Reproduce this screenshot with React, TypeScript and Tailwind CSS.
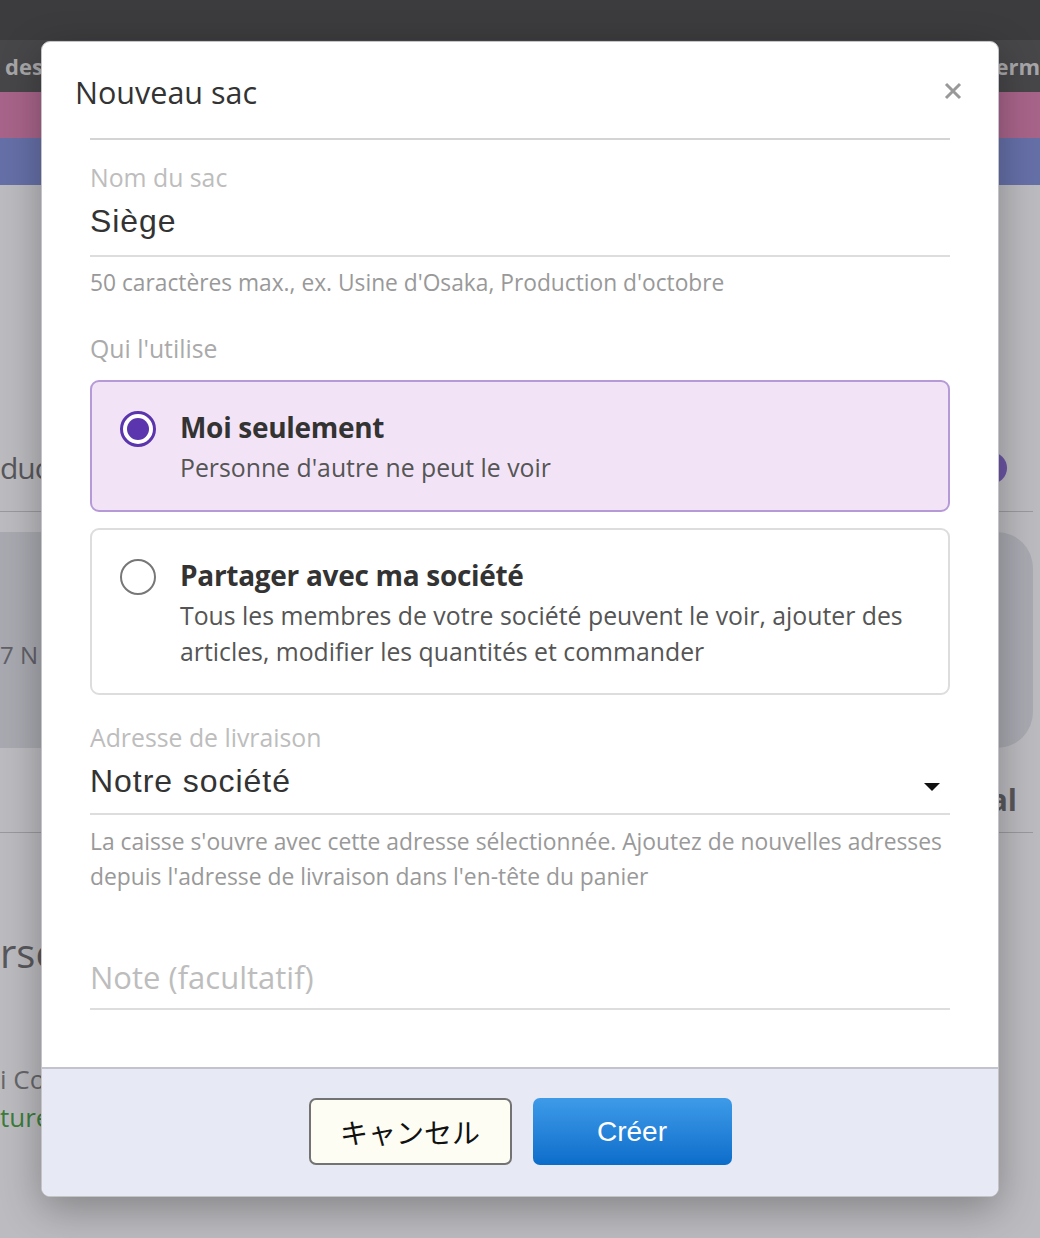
import React from 'react';

const sans = { fontFamily: '"Open Sans", "Noto Sans", sans-serif' };

function Radio({ checked }: { checked: boolean }) {
  if (checked) {
    return (
      <span className="mt-[3px] flex h-[36px] w-[36px] shrink-0 items-center justify-center rounded-full border-[3px] border-[#5b35ae] bg-white">
        <span className="h-[22px] w-[22px] rounded-full bg-[#5b35ae]" />
      </span>
    );
  }
  return <span className="mt-[3px] h-[36px] w-[36px] shrink-0 rounded-full border-2 border-[#777777] bg-white" />;
}

function Option({
  checked,
  title,
  desc,
}: {
  checked: boolean;
  title: string;
  desc: React.ReactNode;
}) {
  return (
    <div
      className={
        checked
          ? 'flex gap-[24px] rounded-[9px] border-2 border-[#b69ad8] bg-[#f2e4f6] pb-[25px] pl-[28px] pr-[20px] pt-[26px]'
          : 'flex gap-[24px] rounded-[9px] border-2 border-[#dddddd] bg-white pb-[24px] pl-[28px] pr-[20px] pt-[26px]'
      }
    >
      <Radio checked={checked} />
      <div>
        <div className="text-[28px] font-bold leading-[38px] tracking-[-0.3px] text-[#333333]">{title}</div>
        <div className="mt-[3px] text-[24.8px] leading-[36px] text-[#555555]">{desc}</div>
      </div>
    </div>
  );
}

export default function App() {
  return (
    <div className="relative h-[1238px] w-[1040px] overflow-hidden bg-[#bcbcc0]" style={sans}>
      {/* page behind the dialog */}
      <div className="h-[40px] bg-[#3c3b3d]" />
      <div className="flex h-[52px] items-center justify-between bg-[#474648] pl-[5px] text-[22px] font-bold text-[#a7a7aa]">
        <span>des</span>
        <span>erm</span>
      </div>
      <div className="h-[46px] bg-[#a8648a]" />
      <div className="h-[47px] bg-[#6670a8]" />
      <div className="pr-[7px]">
        <div className="mt-[255px] flex h-[72px] items-center justify-between border-b border-[#9a9a9e] pb-[16px]">
          <span className="text-[30px] tracking-[-1px] text-[#58585c]">duc</span>
          <span className="mr-[26px] h-[32px] w-[32px] rounded-full bg-[#6c55a6]" />
        </div>
        <div className="mt-[20px] flex h-[216px] items-center rounded-r-[36px] bg-[#a9a9b1]">
          <span className="mt-[30px] text-[24px] text-[#606066]">7 N</span>
        </div>
        <div className="flex h-[85px] items-end justify-end border-b border-[#9a9a9e] pb-[10px]">
          <span className="mr-[16px] text-[30px] font-bold text-[#58585c]">al</span>
        </div>
        <div className="mt-[90px] text-[40px] leading-[60px] text-[#58585c]">rse</div>
        <div className="mt-[77px] text-[26px] leading-[38px] text-[#66666a]">i Co</div>
        <div className="text-[26px] leading-[38px] text-[#3c7d3c]">ture</div>
      </div>

      {/* dialog */}
      <div className="absolute left-[41px] top-[41px] flex h-[1156px] w-[958px] flex-col overflow-hidden rounded-[9px] border border-[#c4c4c8] bg-white shadow-[0_12px_40px_rgba(0,0,0,0.3)]">
        <div className="flex h-[96px] items-center justify-between pl-[33px] pr-[36px] pt-[6px]">
          <h1 className="text-[30.5px] font-normal text-[#333333]">Nouveau sac</h1>
          <svg width="18" height="18" viewBox="0 0 18 18" className="mt-[-4px]">
            <path d="M2 2L16 16M16 2L2 16" stroke="#999999" strokeWidth="3" />
          </svg>
        </div>
        <div className="flex flex-1 flex-col px-[48px]">
          <div className="border-t-2 border-[#d4d4d4]" />

          <div className="mt-[21px] text-[24.8px] leading-[32px] text-[#bdbdbd]">Nom du sac</div>
          <div
            className="mt-[8px] border-b-2 border-[#dddddd] pb-[14px] text-[32px] leading-[40px] tracking-[0.9px] text-[#333333]"
            style={{ fontFamily: '"Liberation Sans", Arial, sans-serif' }}
          >
            Siège
          </div>
          <div className="mt-[11px] text-[22.75px] leading-[30px] text-[#999999]">
            50 caractères max., ex. Usine d'Osaka, Production d'octobre
          </div>

          <div className="mt-[34px] text-[24.8px] leading-[32px] text-[#aaaaaa]">Qui l'utilise</div>
          <div className="mt-[16px] flex flex-col gap-[16px]">
            <Option checked title="Moi seulement" desc="Personne d'autre ne peut le voir" />
            <Option
              checked={false}
              title="Partager avec ma société"
              desc={
                <>
                  Tous les membres de votre société peuvent le voir, ajouter des
                  <br />
                  articles, modifier les quantités et commander
                </>
              }
            />
          </div>

          <div className="mt-[26px] text-[24.8px] leading-[32px] text-[#bdbdbd]">Adresse de livraison</div>
          <div className="mt-[8px] flex items-center justify-between border-b-2 border-[#dddddd] pb-[12px]">
            <span
              className="text-[32px] leading-[40px] tracking-[0.95px] text-[#333333]"
              style={{ fontFamily: '"Liberation Sans", Arial, sans-serif' }}
            >
              Notre société
            </span>
            <svg width="16" height="8" viewBox="0 0 16 8" className="mr-[10px] mt-[12px]">
              <path d="M0 0H16L8 8Z" fill="#111111" />
            </svg>
          </div>
          <div className="mt-[9px] text-[22.85px] leading-[35px] text-[#999999]">
            La caisse s'ouvre avec cette adresse sélectionnée. Ajoutez de nouvelles adresses
            <br />
            depuis l'adresse de livraison dans l'en-tête du panier
          </div>

          <div className="mt-[63px] border-b-2 border-[#dddddd] pb-[11px] text-[31px] leading-[40px] text-[#bdbdbd]">
            Note (facultatif)
          </div>
        </div>

        <div className="flex h-[129px] justify-center gap-[21px] border-t-2 border-[#c2c3cc] bg-[#e7e9f5] pt-[29px]">
          <button
            className="h-[67px] w-[203px] rounded-[7px] border-2 border-[#737373] bg-[#fdfdf4] text-[28px] text-[#111111]"
            style={{ fontFamily: '"Noto Sans CJK JP", sans-serif' }}
          >
            キャンセル
          </button>
          <button
            className="h-[67px] w-[199px] rounded-[7px] bg-gradient-to-b from-[#3d9be9] to-[#0a6dca] text-[28px] text-white"
            style={{ fontFamily: '"Liberation Sans", Arial, sans-serif' }}
          >
            Créer
          </button>
        </div>
      </div>
    </div>
  );
}
